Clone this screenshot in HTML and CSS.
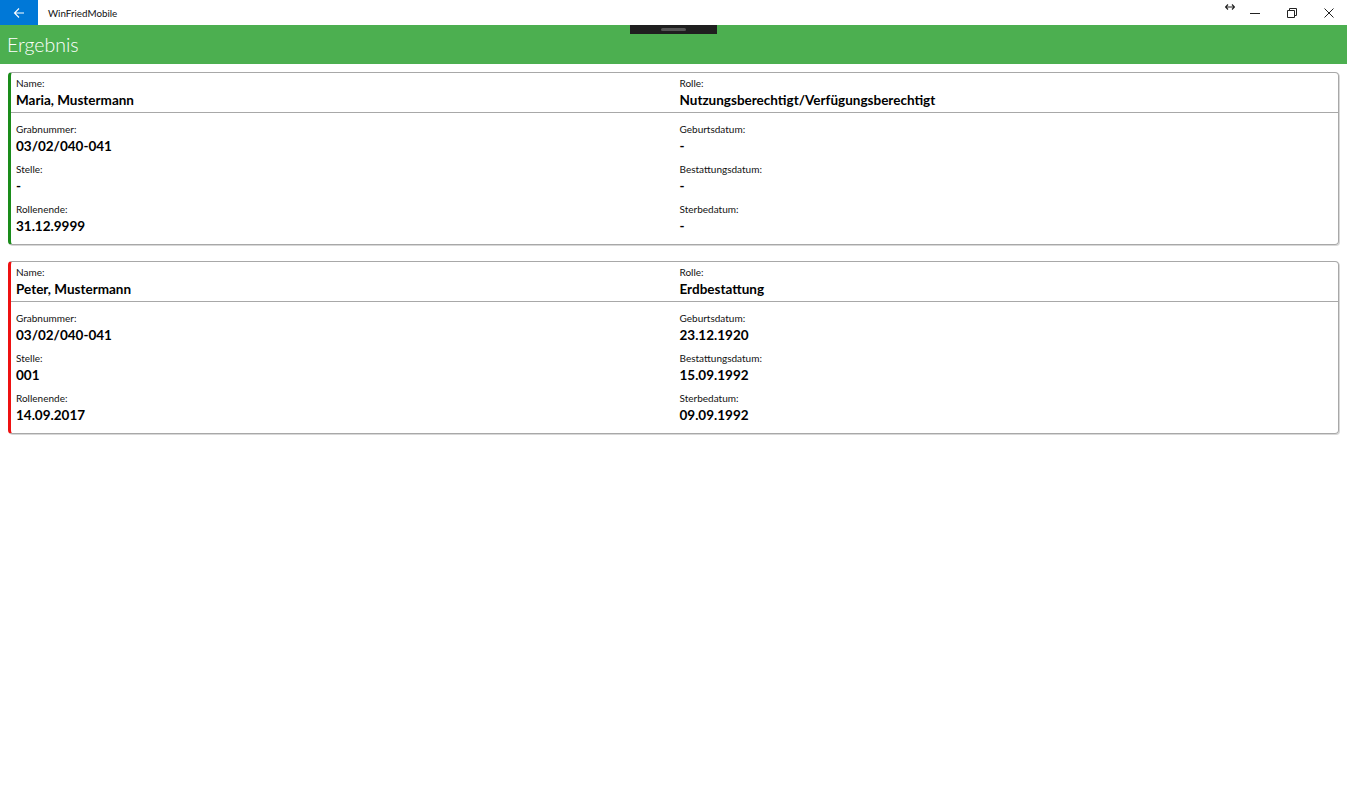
FILE: index.html
```html
<!DOCTYPE html>
<html lang="de">
<head>
    <meta charset="UTF-8">
    <title>WinFriedMobile</title>
    <link rel="stylesheet" href="styles.css">
</head>
<body>
    <div class="titlebar">
        <div class="back-btn">
            <svg width="12" height="12" viewBox="0 0 12 12"><path d="M11 6H1.5M6 1.5L1.5 6 6 10.5" fill="none" stroke="#fff" stroke-width="1.1"/></svg>
        </div>
        <div class="app-title">WinFriedMobile</div>
        <div class="win-controls">
            <div class="ctl resize">
                <svg width="10" height="6" viewBox="0 0 10 6"><path d="M0.5 3H9.5M3 0.5L0.5 3 3 5.5M7 0.5L9.5 3 7 5.5" fill="none" stroke="#222" stroke-width="1.2"/></svg>
            </div>
            <div class="ctl">
                <svg width="10" height="10" viewBox="0 0 10 10"><path d="M0 5.5H10" stroke="#222" stroke-width="1"/></svg>
            </div>
            <div class="ctl">
                <svg width="10" height="10" viewBox="0 0 10 10"><path d="M0.5 2.5H7.5V9.5H0.5Z M2.5 2.5V0.5H9.5V7.5H7.5" fill="none" stroke="#222" stroke-width="1"/></svg>
            </div>
            <div class="ctl">
                <svg width="10" height="10" viewBox="0 0 10 10"><path d="M0.5 0.5L9.5 9.5M9.5 0.5L0.5 9.5" stroke="#222" stroke-width="1"/></svg>
            </div>
        </div>
    </div>

    <div class="header">
        <h1>Ergebnis</h1>
        <div class="drag-tab"><span></span></div>
    </div>

    <div class="content">
        <div class="card green">
            <div class="card-head">
                <div class="field"><div class="lbl">Name:</div><div class="val">Maria, Mustermann</div></div>
                <div class="field"><div class="lbl">Rolle:</div><div class="val">Nutzungsberechtigt/Verfügungsberechtigt</div></div>
            </div>
            <div class="card-body">
                <div class="field"><div class="lbl">Grabnummer:</div><div class="val">03/02/040-041</div></div>
                <div class="field"><div class="lbl">Geburtsdatum:</div><div class="val">-</div></div>
                <div class="field"><div class="lbl">Stelle:</div><div class="val">-</div></div>
                <div class="field"><div class="lbl">Bestattungsdatum:</div><div class="val">-</div></div>
                <div class="field"><div class="lbl">Rollenende:</div><div class="val">31.12.9999</div></div>
                <div class="field"><div class="lbl">Sterbedatum:</div><div class="val">-</div></div>
            </div>
        </div>

        <div class="card red">
            <div class="card-head">
                <div class="field"><div class="lbl">Name:</div><div class="val">Peter, Mustermann</div></div>
                <div class="field"><div class="lbl">Rolle:</div><div class="val">Erdbestattung</div></div>
            </div>
            <div class="card-body">
                <div class="field"><div class="lbl">Grabnummer:</div><div class="val">03/02/040-041</div></div>
                <div class="field"><div class="lbl">Geburtsdatum:</div><div class="val">23.12.1920</div></div>
                <div class="field"><div class="lbl">Stelle:</div><div class="val">001</div></div>
                <div class="field"><div class="lbl">Bestattungsdatum:</div><div class="val">15.09.1992</div></div>
                <div class="field"><div class="lbl">Rollenende:</div><div class="val">14.09.2017</div></div>
                <div class="field"><div class="lbl">Sterbedatum:</div><div class="val">09.09.1992</div></div>
            </div>
        </div>
    </div>
</body>
</html>
```

FILE: styles.css
```css
body {
    margin: 0;
    font-family: Lato, 'Noto Sans', sans-serif;
    background: #fff;
    color: #000;
}

.titlebar {
    display: flex;
    align-items: center;
    height: 25px;
    background: #fff;
}

.back-btn {
    width: 38px;
    height: 25px;
    background: #0078d7;
    display: flex;
    align-items: center;
    justify-content: center;
}

.app-title {
    margin-left: 10px;
    font-size: 9.8px;
    color: #111;
}

.win-controls {
    margin-left: auto;
    display: flex;
    height: 25px;
}

.ctl {
    width: 37px;
    display: flex;
    align-items: center;
    justify-content: center;
}

.ctl.resize {
    width: 20px;
    align-items: flex-start;
    padding-top: 4px;
    margin-right: -4px;
}

.header {
    position: relative;
    height: 39px;
    background: #4caf50;
    display: flex;
    align-items: center;
    padding-left: 7px;
}

.header h1 {
    margin: 0;
    font-size: 19.5px;
    font-weight: 300;
    color: #fff;
}

.drag-tab {
    position: absolute;
    left: 630px;
    top: 0;
    width: 87px;
    height: 9px;
    background: #1f1f1f;
    display: flex;
    justify-content: center;
    align-items: center;
}

.drag-tab span {
    width: 25px;
    height: 3px;
    border-radius: 2px;
    background: #555;
}

.content {
    padding: 8px;
    display: flex;
    flex-direction: column;
    gap: 16px;
}

.card {
    border: 1px solid #a8a8a8;
    border-radius: 4px;
    border-left: 3px solid #1a8c1a;
    box-shadow: 1px 1px 0 #d8d8d8;
}

.card.red {
    border-left-color: #ee1111;
}

.card-head,
.card-body {
    display: grid;
    grid-template-columns: 1fr 1fr;
}

.card-head {
    padding: 3px 0 2px;
    border-bottom: 1px solid #a8a8a8;
}

.card-body {
    padding: 9px 0 8px;
    row-gap: 6px;
}

.field {
    padding: 0 5px;
}

.lbl {
    font-size: 10px;
    line-height: 14px;
    color: #111;
}

.val {
    font-size: 13.5px;
    line-height: 20px;
    font-weight: 700;
}
```
